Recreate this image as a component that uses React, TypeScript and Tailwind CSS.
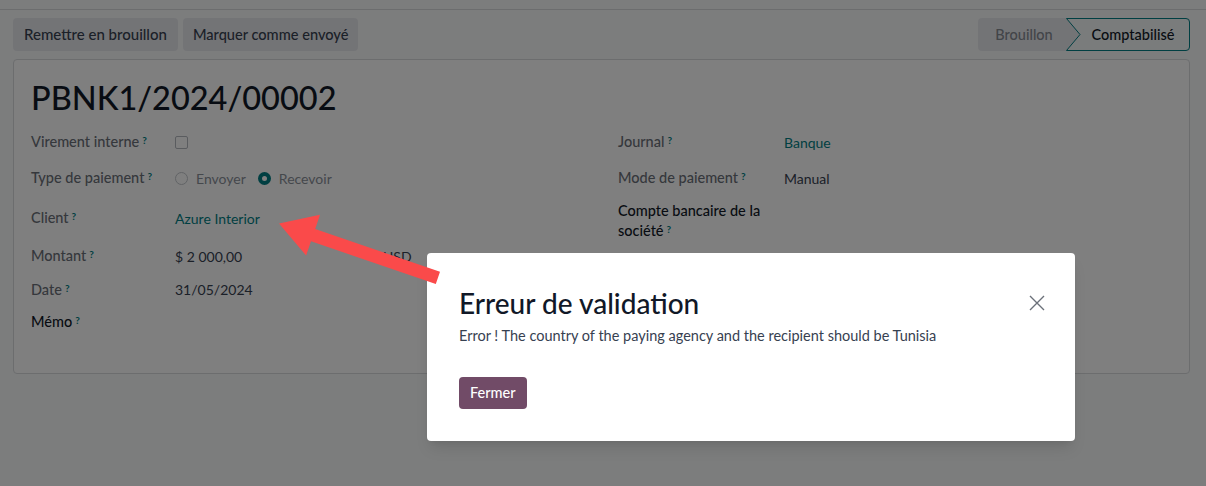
import React from 'react';

const Help: React.FC = () => (
  <sup className="ml-[3px] text-[10px] font-bold text-[#017e84] relative -top-[3px]">?</sup>
);

const Label: React.FC<{ text: string; strong?: boolean }> = ({ text, strong }) => (
  <span className={strong ? 'text-[14.5px] font-medium text-[#111827]' : 'text-[14.5px] font-medium text-[#6b7079]'}>
    {text}
    <Help />
  </span>
);

const App: React.FC = () => {
  return (
    <div className="relative w-[1206px] h-[486px] overflow-hidden bg-[#f9fafb] font-['Lato',sans-serif] text-[14px] text-[#374151]">
      <div className="h-[10px] border-b border-[#d8dadd]" />

      {/* control panel */}
      <div className="flex items-center justify-between px-[13px] mt-[8px] pr-[16px]">
        <div className="flex gap-[5px]">
          <button className="h-[33px] px-[11px] rounded-[4px] bg-[#e7e9ed] text-[15px] font-medium text-[#374151]">
            Remettre en brouillon
          </button>
          <button className="h-[33px] px-[10px] rounded-[4px] bg-[#e7e9ed] text-[14.6px] font-medium text-[#374151]">
            Marquer comme envoyé
          </button>
        </div>
        <div className="flex h-[33px] rounded-[4px] bg-[#e7e9ed]">
          <div className="w-[88px] flex items-center justify-center pl-[4px] text-[14.5px] font-medium text-[#858a92]">
            Brouillon
          </div>
          <div className="relative w-[124px] flex items-center justify-center pl-[10px] text-[14.5px] font-medium text-[#111827]">
            <svg className="absolute inset-0" width="124" height="33" viewBox="0 0 124 33">
              <path
                d="M0.5 0.5 H120 Q123.5 0.5 123.5 4 V29 Q123.5 32.5 120 32.5 H0.5 L14 16.5 Z"
                fill="#f4f8f9"
                stroke="#017e84"
                strokeWidth="1"
              />
            </svg>
            <span className="relative">Comptabilisé</span>
          </div>
        </div>
      </div>

      {/* form sheet */}
      <div className="mx-[13px] mt-[8px] mr-[16px] h-[315px] rounded-[4px] border border-[#d8dadd] bg-white px-[17px] pt-[18px]">
        <h1 className="h-[40px] leading-[40px] text-[32.5px] font-medium text-[#111827]">PBNK1/2024/00002</h1>

        <div className="mt-[6px] flex">
          {/* left group */}
          <div className="w-[587px] flex flex-col">
            <div className="h-[36px] flex items-center">
              <div className="w-[144px]"><Label text="Virement interne" /></div>
              <span className="w-[13px] h-[13px] border border-[#b5b9bf] rounded-[2px] bg-white" />
            </div>
            <div className="h-[36px] flex items-center">
              <div className="w-[144px]"><Label text="Type de paiement" /></div>
              <div className="flex items-center gap-[8px] text-[#8a9099]">
                <span className="w-[13px] h-[13px] rounded-full border border-[#c3c7cc] bg-white" />
                <span>Envoyer</span>
                <span className="ml-[4px] w-[13px] h-[13px] rounded-full bg-[#017e84] flex items-center justify-center">
                  <span className="w-[5px] h-[5px] rounded-full bg-white" />
                </span>
                <span>Recevoir</span>
              </div>
            </div>
            <div className="h-[44px] flex items-center">
              <div className="w-[144px]"><Label text="Client" /></div>
              <span className="text-[#017e84]">Azure Interior</span>
            </div>
            <div className="h-[32px] flex items-center">
              <div className="w-[144px]"><Label text="Montant" /></div>
              <span className="w-[208px]">$ 2 000,00</span>
              <span>USD</span>
            </div>
            <div className="h-[35px] flex items-center">
              <div className="w-[144px]"><Label text="Date" /></div>
              <span>31/05/2024</span>
            </div>
            <div className="h-[30px] flex items-center">
              <div className="w-[144px]"><Label text="Mémo" strong /></div>
            </div>
          </div>

          {/* right group */}
          <div className="flex-1 flex flex-col">
            <div className="h-[36px] flex items-center">
              <div className="w-[166px]"><Label text="Journal" /></div>
              <span className="text-[#017e84]">Banque</span>
            </div>
            <div className="h-[36px] flex items-center">
              <div className="w-[166px]"><Label text="Mode de paiement" /></div>
              <span>Manual</span>
            </div>
            <div className="h-[50px] flex items-center">
              <div className="w-[152px] leading-[20px]">
                <Label text="Compte bancaire de la société" strong />
              </div>
            </div>
          </div>
        </div>
      </div>

      {/* modal backdrop */}
      <div className="absolute inset-0 bg-black/50" />

      {/* dialog */}
      <div className="absolute left-[427px] top-[253px] w-[648px] h-[188px] rounded-[4px] bg-white shadow-lg">
        <div className="flex items-start justify-between pl-[32px] pr-[30px] pt-[34px]">
          <h4 className="text-[28px] leading-[32px] font-medium text-[#111827]">Erreur de validation</h4>
          <button className="mt-[8px] text-[#6b7079]">
            <svg width="16" height="16" viewBox="0 0 16 16" fill="none" stroke="currentColor" strokeWidth="1.4">
              <path d="M1 1 L15 15 M15 1 L1 15" />
            </svg>
          </button>
        </div>
        <p className="pl-[32px] mt-[6px] text-[14.5px] text-[#374151]">
          Error ! The country of the paying agency and the recipient should be Tunisia
        </p>
        <div className="pl-[32px] mt-[30px]">
          <button className="h-[32px] px-[11px] rounded-[4px] bg-[#714b67] text-white text-[14.5px] font-medium">Fermer</button>
        </div>
      </div>

      {/* annotation arrow */}
      <svg className="absolute inset-0 pointer-events-none" width="1206" height="486" viewBox="0 0 1206 486">
        <polygon
          points="279,223.5 320,214.8 315.2,229 440,271.8 435.8,284 311,241.3 306.1,255.5"
          fill="#fa4a4a"
        />
      </svg>
    </div>
  );
};

export default App;
